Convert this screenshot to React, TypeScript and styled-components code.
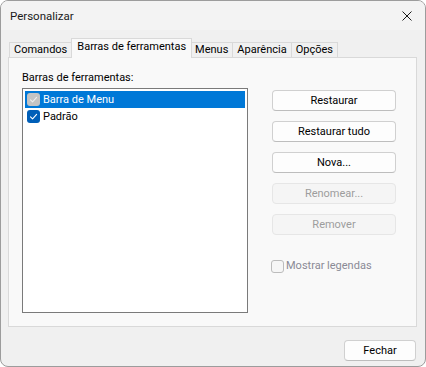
import React from "react";
import styled, { createGlobalStyle, css } from "styled-components";

const Global = createGlobalStyle`
  html, body { margin: 0; padding: 0; background: #ffffff; }
  body { font-family: "Roboto", "Segoe UI", "Noto Sans", sans-serif; font-size: 11px; color: #000; }
  * { box-sizing: border-box; }
`;

const Window = styled.div`
  width: 426px;
  height: 367px;
  border: 1px solid #9c9c9c;
  border-radius: 8px;
  overflow: hidden;
  background: #f0f0f0;
  display: flex;
  flex-direction: column;
`;

const TitleBar = styled.div`
  height: 29px;
  display: flex;
  align-items: center;
  justify-content: space-between;
  padding: 0 10px 0 9px;
  background: #f3f3f3;
`;

const Title = styled.span`
  font-size: 11.5px;
  line-height: 16px;
  color: #1a1a1a;
`;

const CloseBtn = styled.div`
  width: 12px;
  height: 12px;
  display: flex;
  align-items: center;
  justify-content: center;
  margin-right: 2px;
`;

const Body = styled.div`
  flex: 1;
  display: flex;
  flex-direction: column;
  padding: 8px 8px 0 7px;
`;

const TabStrip = styled.div`
  display: flex;
  align-items: flex-end;
  padding-left: 2px;
  height: 19px;
  position: relative;
  z-index: 1;
`;

const Tab = styled.div<{ $active?: boolean }>`
  height: 15px;
  padding: 0 4px;
  display: flex;
  align-items: center;
  border: 1px solid #d9d9d9;
  border-bottom: none;
  background: #f0f0f0;
  margin-left: -1px;
  line-height: 14px;
  white-space: nowrap;
  ${(p) =>
    p.$active &&
    css`
      padding: 0 5px 3px 5px;
      margin: 0 -1px -1px -1px;
      background: #f9f9f9;
      position: relative;
      z-index: 2;
      height: 20px;
    `}
`;

const Panel = styled.div`
  height: 270px;
  border: 1px solid #d9d9d9;
  background: #f9f9f9;
  padding: 12px 13px 0 13px;
  display: flex;
  flex-direction: column;
`;

const Label = styled.div`
  line-height: 16px;
  margin-bottom: 2px;
`;

const Content = styled.div`
  display: flex;
  align-items: flex-start;
  gap: 24px;
`;

const ListBox = styled.div`
  width: 226px;
  height: 225px;
  border: 1px solid #7a7a7a;
  background: #ffffff;
  padding: 2px;
`;

const Row = styled.div<{ $selected?: boolean }>`
  height: 17px;
  display: flex;
  align-items: center;
  gap: 3px;
  padding-left: 2px;
  background: ${(p) => (p.$selected ? "#0078d7" : "transparent")};
  color: ${(p) => (p.$selected ? "#ffffff" : "#000000")};
  line-height: 16px;
`;

const Box = styled.div<{ $variant: "checked" | "disabledChecked" | "disabled" }>`
  width: 13px;
  height: 13px;
  border-radius: 3px;
  display: flex;
  align-items: center;
  justify-content: center;
  flex-shrink: 0;
  ${(p) =>
    p.$variant === "checked" &&
    css`
      background: #005fb8;
    `}
  ${(p) =>
    p.$variant === "disabledChecked" &&
    css`
      background: #c4c4c4;
    `}
  ${(p) =>
    p.$variant === "disabled" &&
    css`
      background: #f6f6f6;
      border: 1px solid #bcbcbc;
    `}
`;

const Side = styled.div`
  display: flex;
  flex-direction: column;
  padding-top: 2px;
`;

const Buttons = styled.div`
  display: flex;
  flex-direction: column;
  gap: 10px;
`;

const Button = styled.div<{ $disabled?: boolean; $width?: number }>`
  width: ${(p) => p.$width ?? 124}px;
  height: 21px;
  border-radius: 4px;
  display: flex;
  align-items: center;
  justify-content: center;
  line-height: 16px;
  ${(p) =>
    p.$disabled
      ? css`
          background: #f5f5f5;
          border: 1px solid #e6e6e6;
          color: #9d9d9d;
        `
      : css`
          background: #fdfdfd;
          border: 1px solid #d0d0d0;
          border-bottom-color: #bdbdbd;
          color: #000;
        `}
`;

const CheckLine = styled.div<{ $disabled?: boolean }>`
  margin-top: 23px;
  display: flex;
  align-items: center;
  gap: 2px;
  color: ${(p) => (p.$disabled ? "#8a8a96" : "#000")};
  line-height: 16px;
  margin-left: -1px;
`;

const Footer = styled.div`
  display: flex;
  justify-content: flex-end;
  padding: 13px 1px 0 0;
`;

const Check = ({ color = "#ffffff" }: { color?: string }) => (
  <svg width="9" height="9" viewBox="0 0 9 9">
    <path d="M1.5 4.8 L3.6 6.8 L7.6 2.4" fill="none" stroke={color} strokeWidth="1.1" strokeLinecap="round" strokeLinejoin="round" />
  </svg>
);

export default function App() {
  return (
    <>
      <Global />
      <Window>
        <TitleBar>
          <Title>Personalizar</Title>
          <CloseBtn>
            <svg width="10" height="10" viewBox="0 0 10 10">
              <path d="M0.5 0.5 L9.5 9.5 M9.5 0.5 L0.5 9.5" stroke="#1a1a1a" strokeWidth="1" />
            </svg>
          </CloseBtn>
        </TitleBar>
        <Body>
          <TabStrip>
            <Tab>Comandos</Tab>
            <Tab $active>Barras de ferramentas</Tab>
            <Tab>Menus</Tab>
            <Tab>Aparência</Tab>
            <Tab>Opções</Tab>
          </TabStrip>
          <Panel>
            <Label>Barras de ferramentas:</Label>
            <Content>
              <ListBox>
                <Row $selected>
                  <Box $variant="disabledChecked">
                    <Check color="#eeeeee" />
                  </Box>
                  Barra de Menu
                </Row>
                <Row>
                  <Box $variant="checked">
                    <Check />
                  </Box>
                  Padrão
                </Row>
              </ListBox>
              <Side>
                <Buttons>
                  <Button>Restaurar</Button>
                  <Button>Restaurar tudo</Button>
                  <Button>Nova...</Button>
                  <Button $disabled>Renomear...</Button>
                  <Button $disabled>Remover</Button>
                </Buttons>
                <CheckLine $disabled>
                  <Box $variant="disabled" />
                  Mostrar legendas
                </CheckLine>
              </Side>
            </Content>
          </Panel>
          <Footer>
            <Button $width={72}>Fechar</Button>
          </Footer>
        </Body>
      </Window>
    </>
  );
}
